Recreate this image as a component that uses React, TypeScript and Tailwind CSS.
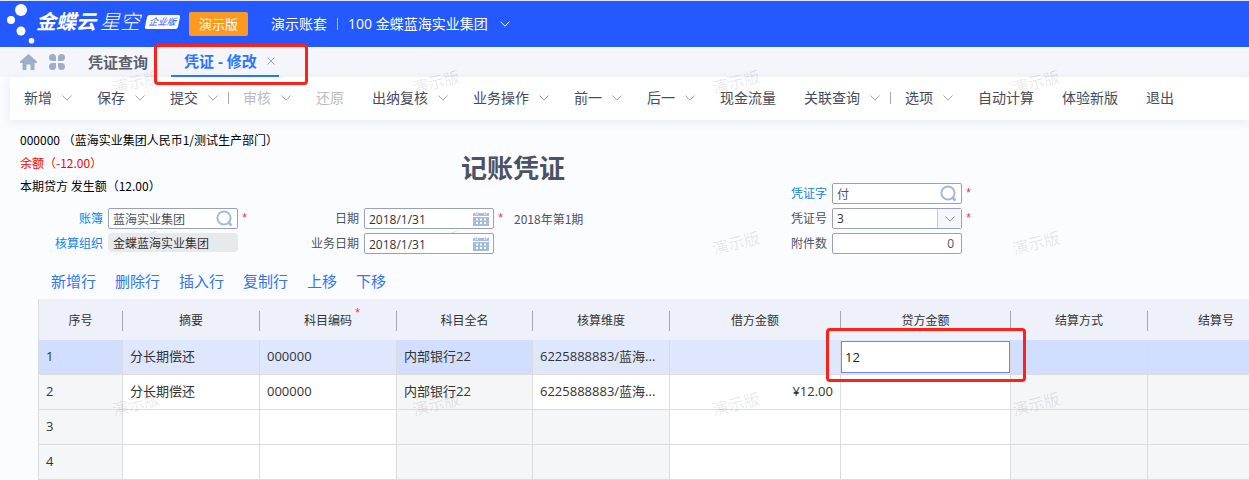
import { ReactNode, useState } from 'react'
import clsx from 'clsx'

type TMenu = {
    label: string,
    arrow?: boolean,
    disabled?: boolean,
    divider?: boolean
}

type TColumn = {
    key: string,
    label: string,
    width: string,
    locked?: boolean,
    required?: boolean,
    align?: 'right'
}

type TEntry = Record<string, string>

const menus: TMenu[] = [
    { label: '新增', arrow: true },
    { label: '保存', arrow: true },
    { label: '提交', arrow: true, divider: true },
    { label: '审核', arrow: true, disabled: true },
    { label: '还原', disabled: true },
    { label: '出纳复核', arrow: true },
    { label: '业务操作', arrow: true },
    { label: '前一', arrow: true },
    { label: '后一', arrow: true },
    { label: '现金流量' },
    { label: '关联查询', arrow: true, divider: true },
    { label: '选项', arrow: true },
    { label: '自动计算' },
    { label: '体验新版' },
    { label: '退出' },
]

const rowActions = ['新增行', '删除行', '插入行', '复制行', '上移', '下移']

const columns: TColumn[] = [
    { key: 'no', label: '序号', width: 'w-[84px]', locked: true },
    { key: 'summary', label: '摘要', width: 'w-[137px]' },
    { key: 'code', label: '科目编码', width: 'w-[137px]', required: true },
    { key: 'name', label: '科目全名', width: 'w-[136px]', locked: true },
    { key: 'dimension', label: '核算维度', width: 'w-[137px]' },
    { key: 'debit', label: '借方金额', width: 'w-[171px]', align: 'right' },
    { key: 'credit', label: '贷方金额', width: 'w-[170px]', align: 'right' },
    { key: 'method', label: '结算方式', width: 'w-[137px]', locked: true },
    { key: 'billNo', label: '结算号', width: 'w-[137px]', locked: true },
]

const entries: TEntry[] = [
    { no: '1', summary: '分长期偿还', code: '000000', name: '内部银行22', dimension: '6225888883/蓝海...' },
    { no: '2', summary: '分长期偿还', code: '000000', name: '内部银行22', dimension: '6225888883/蓝海...', debit: '¥12.00' },
    { no: '3' },
    { no: '4' },
]

const Chevron = ({ className }: { className?: string }) => (
    <svg className={clsx('shrink-0', className)} width="10" height="6" viewBox="0 0 10 6" fill="none" stroke="currentColor">
        <path d="M0.5 0.5 L5 5.2 L9.5 0.5" />
    </svg>
)

const SearchIcon = () => (
    <svg width="17" height="17" viewBox="0 0 17 17" fill="none" stroke="#a3b9dc" strokeWidth="2">
        <circle cx="8" cy="8" r="6.6" />
        <path d="M12 12 L15.5 15.5" strokeWidth="2.6" />
    </svg>
)

const CalendarIcon = () => (
    <svg width="16" height="14" viewBox="0 0 16 14">
        <path d="M0 1 H2.5 V2.5 H5 V1 H11 V2.5 H13.5 V1 H16 V4 H0 Z" fill="#a9bddd" />
        <path d="M3.2 0 H4.4 V2 H3.2 Z M11.6 0 H12.8 V2 H11.6 Z" fill="#a9bddd" />
        <path d="M0 5 H16 V14 H0 Z" fill="#a3bbdf" />
        <path d="M3 6.5h2v2h-2z M7 6.5h2v2h-2z M11 6.5h2v2h-2z M3 10h2v2h-2z M7 10h2v2h-2z M11 10h2v2h-2z" fill="#fff" />
    </svg>
)

const Logo = () => (
    <svg className="shrink-0" width="30" height="44" viewBox="0 0 30 44" fill="#fff">
        <circle cx="15" cy="8" r="6" />
        <circle cx="5" cy="18" r="4" />
        <circle cx="15" cy="29" r="4.5" />
        <circle cx="25.5" cy="38.8" r="2.8" />
    </svg>
)

type TField = {
    id: string,
    label: string,
    labelWidth: string,
    link?: boolean,
    required?: boolean,
    note?: string,
    children: ReactNode
}

const Field = ({ id, label, labelWidth, link, required, note, children }: TField) => (
    <div className="flex h-[21px] items-center">
        <label htmlFor={id} className={clsx('shrink-0 pr-[5px] text-right', labelWidth, link ? 'text-[#0d84e8]' : 'text-[#4b5263]')}>{label}</label>
        <div className="relative z-10 h-[21px] w-[130px] shrink-0">{children}</div>
        {required && <span className="w-4 pl-[3px] font-['Liberation_Mono'] text-red-500">*</span>}
        {note && <span className="pl-1 font-['Noto_Sans_CJK_SC',sans-serif] whitespace-nowrap text-[#4b5263]">{note}</span>}
    </div>
)

const boxClass = 'block h-[21px] w-full rounded-xs border border-[#97a1bb] bg-white px-1 outline-none'

const FieldIcon = ({ children }: { children: ReactNode }) => (
    <span className="pointer-events-none absolute inset-y-0 right-[5px] flex items-center">{children}</span>
)

const Watermark = () => (
    <div aria-hidden="true" className="pointer-events-none absolute inset-0 grid auto-rows-[161px] grid-cols-[repeat(4,300px)] overflow-hidden pt-[70px] pl-[112px]">
        {
            Array.from({ length: 12 }, (_, index) => (
                <span key={index} className="h-6 w-12 -rotate-[14deg] text-base leading-6 text-black/10">演示版</span>
            ))
        }
    </div>
)

const App = () => {

    const [credit, setCredit] = useState('12')
    const [number, setNumber] = useState('3')

    return (
        <div className="relative min-h-screen overflow-hidden bg-[#fbfcff] font-['Open_Sans','Noto_Sans_CJK_SC',sans-serif] text-xs text-[#333]">
            <header className="flex h-[47px] items-center border-t border-[#dfe5f5] bg-[#2459ff] pl-1.5 text-sm text-white">
                <Logo />
                <div className="flex items-center pb-1 italic">
                    <span className="text-xl font-bold">金蝶云</span>
                    <span className="pl-1 text-xl font-light">星空</span>
                    <span className="ml-1.5 -skew-x-12 rounded-xs bg-white px-[3px] text-[9px] leading-[14px] text-[#2459ff]">企业版</span>
                </div>
                <button className="ml-2.5 h-6 rounded-xs bg-[#ff9a1e] px-2.5 text-[13px]">演示版</button>
                <span className="pl-[23px]">演示账套</span>
                <span className="mx-2.5 h-3 w-px bg-white/60" />
                <button className="flex items-center gap-3">
                    100 金蝶蓝海实业集团
                    <Chevron />
                </button>
            </header>

            <nav className="flex h-[30px] items-center bg-[#f4f6fb] pl-5 text-[15px] font-bold">
                <button aria-label="首页" className="text-[#9fadca]">
                    <svg width="17" height="16" viewBox="0 0 17 16" fill="currentColor">
                        <path d="M8.5 0 L17 7.5 V9 H14.5 V15 Q14.5 16 13.5 16 H10.5 V10.5 H6.5 V16 H3.5 Q2.5 16 2.5 15 V9 H0 V7.5 Z" />
                    </svg>
                </button>
                <button aria-label="应用" className="ml-3 text-[#9fadca]">
                    <svg width="16" height="16" viewBox="0 0 16 16" fill="currentColor">
                        <path d="M3.5 0 A3.5 3.5 0 0 1 7 3.5 V7 H3.5 A3.5 3.5 0 0 1 3.5 0 Z" />
                        <path d="M12.5 0 A3.5 3.5 0 0 1 12.5 7 H9 V3.5 A3.5 3.5 0 0 1 12.5 0 Z" />
                        <path d="M3.5 9 H7 V12.5 A3.5 3.5 0 1 1 3.5 9 Z" />
                        <path d="M9 9 H12.5 A3.5 3.5 0 1 1 9 12.5 Z" />
                    </svg>
                </button>
                <button className="ml-[23px] text-[#5a6070]">凭证查询</button>
                <div className="relative ml-[23px] flex h-full w-[108px] items-center justify-between border-b-2 border-[#2b74ff] pr-1 pl-[13px] text-[#2b74ff]">
                    <button className="whitespace-nowrap">凭证 - 修改</button>
                    <button aria-label="关闭" className="text-[#9aa3b5]">
                        <svg width="8" height="8" viewBox="0 0 8 8" stroke="currentColor">
                            <path d="M0.5 0.5 L7.5 7.5 M7.5 0.5 L0.5 7.5" />
                        </svg>
                    </button>
                    <span className="pointer-events-none absolute -top-[3px] -right-[29px] -bottom-[10px] -left-[17px] z-20 rounded-sm border-[3px] border-[#ff2116]" />
                </div>
            </nav>

            <div className="ml-2.5 flex h-[43px] items-center bg-white pb-0.5 text-sm whitespace-nowrap text-[#454b5a] shadow-[0_2px_10px_#e3e8f6]">
                {
                    menus.map(item => (
                        <div key={item.label} className="flex items-center">
                            <button disabled={item.disabled} className={clsx('flex items-center gap-2.5 pl-3.5', item.arrow ? 'pr-[11px]' : 'pr-3.5', item.disabled && 'text-[#b9bbc2]')}>
                                {item.label}
                                {item.arrow && <Chevron className="text-[#9ba3b5]" />}
                            </button>
                            {item.divider && <span className="-ml-px h-3 w-px bg-[#a5a8b0]" />}
                        </div>
                    ))
                }
            </div>

            <section className="grid h-[134px] grid-cols-[280px_466px_1fr] items-end">
                <div className="flex flex-col">
                    <div className="pb-[11px] pl-5 font-['Noto_Sans_CJK_SC',sans-serif] leading-[23px] whitespace-nowrap text-black">
                        <p>000000 （蓝海实业集团人民币1/测试生产部门）</p>
                        <p className="text-[#ff0000]">余额（-12.00）</p>
                        <p>本期贷方 发生额（12.00）</p>
                    </div>
                    <div className="flex flex-col gap-1">
                        <Field id="book" label="账簿" labelWidth="w-[108px]" link required>
                            <input id="book" className={clsx(boxClass, 'text-[#4b5263]')} defaultValue="蓝海实业集团" />
                            <FieldIcon><SearchIcon /></FieldIcon>
                        </Field>
                        <Field id="org" label="核算组织" labelWidth="w-[108px]" link>
                            <input id="org" readOnly className="block h-[19px] w-full rounded bg-[#e7eaed] px-[5px] outline-none" value="金蝶蓝海实业集团" />
                        </Field>
                    </div>
                </div>

                <div className="flex flex-col">
                    <h1 className="pb-[22px] text-center text-[26px] leading-9 font-bold text-[#4b5263]">记账凭证</h1>
                    <div className="flex flex-col gap-1">
                        <Field id="date" label="日期" labelWidth="w-[84px]" required note="2018年第1期">
                            <input id="date" className={clsx(boxClass, 'pt-0.5')} defaultValue="2018/1/31" />
                            <FieldIcon><CalendarIcon /></FieldIcon>
                        </Field>
                        <Field id="bizDate" label="业务日期" labelWidth="w-[84px]">
                            <input id="bizDate" className={clsx(boxClass, 'pt-0.5')} defaultValue="2018/1/31" />
                            <FieldIcon><CalendarIcon /></FieldIcon>
                        </Field>
                    </div>
                </div>

                <div className="flex flex-col gap-1">
                    <Field id="word" label="凭证字" labelWidth="w-[86px]" link required>
                        <input id="word" className={clsx(boxClass, 'text-[#4b5263]')} defaultValue="付" />
                        <FieldIcon><SearchIcon /></FieldIcon>
                    </Field>
                    <Field id="number" label="凭证号" labelWidth="w-[86px]" required>
                        <select id="number" className={clsx(boxClass, 'appearance-none')} value={number} onChange={e => setNumber(e.target.value)}>
                            <option>3</option>
                            <option>4</option>
                        </select>
                        <span className="pointer-events-none absolute inset-y-px right-px flex w-6 items-center justify-center border-l border-[#c5c8d0] bg-[#f6f6f7]">
                            <Chevron className="text-[#8d929c]" />
                        </span>
                    </Field>
                    <Field id="attachments" label="附件数" labelWidth="w-[86px]">
                        <input id="attachments" className={clsx(boxClass, 'pr-[7px] text-right text-[#4b5263]')} defaultValue="0" />
                    </Field>
                </div>
            </section>

            <div className="flex h-[45px] items-center gap-[19px] pt-2 pl-[51px] text-[15px] text-[#2f74f5]">
                {rowActions.map(item => <button key={item}>{item}</button>)}
            </div>

            <div className="ml-[38px] overflow-hidden">
                <table className="w-[1247px] table-fixed border-separate border-spacing-0 border-l border-[#dcdcdc]">
                    <thead>
                        <tr className="h-[41px] bg-[#eef1f9]">
                            {
                                columns.map(col => (
                                    <th key={col.key} className={clsx('p-0 pt-0.5 font-normal', col.width)}>
                                        <div className="flex items-center">
                                            <span className="flex-1 text-center">
                                                <span className="relative">
                                                    {col.label}
                                                    {col.required && <span className="absolute -top-1.5 left-full pl-0.5 font-['Liberation_Mono'] text-red-500">*</span>}
                                                </span>
                                            </span>
                                            <span className="h-5 w-px bg-[#a3a8b3]" />
                                        </div>
                                    </th>
                                ))
                            }
                        </tr>
                    </thead>
                    <tbody className="text-[13px]">
                        {
                            entries.map((entry, index) => (
                                <tr key={entry.no} className="h-[35px]">
                                    {
                                        columns.map(col => {
                                            const active = index === 0
                                            const editing = active && col.key === 'credit'
                                            return (
                                                <td
                                                    key={col.key}
                                                    className={clsx(
                                                        'border-r border-b border-[#dcdcdc] whitespace-nowrap',
                                                        editing ? 'relative p-0' : 'px-[7px] py-0',
                                                        col.align === 'right' && 'text-right',
                                                        active && (col.locked ? 'bg-[#d1deff]' : 'bg-[#dfe7ff]'),
                                                        !active && (col.locked || (!entry.summary && col.key === 'dimension') ? 'bg-[#f5f6f8]' : 'bg-white')
                                                    )}
                                                >
                                                    {editing ? (
                                                        <>
                                                            <input
                                                                aria-label="贷方金额"
                                                                className="block h-8 w-full border border-[#6d86e8] bg-white px-[3px] text-[13px] text-[#222] outline-none"
                                                                value={credit}
                                                                onChange={e => setCredit(e.target.value)}
                                                            />
                                                            <span className="pointer-events-none absolute -top-3 -right-4 -bottom-2 -left-[15px] z-20 rounded-sm border-[3px] border-[#ff2116]" />
                                                        </>
                                                    ) : entry[col.key]}
                                                </td>
                                            )
                                        })
                                    }
                                </tr>
                            ))
                        }
                    </tbody>
                </table>
            </div>

            <Watermark />
        </div>
    )
}

export default App
